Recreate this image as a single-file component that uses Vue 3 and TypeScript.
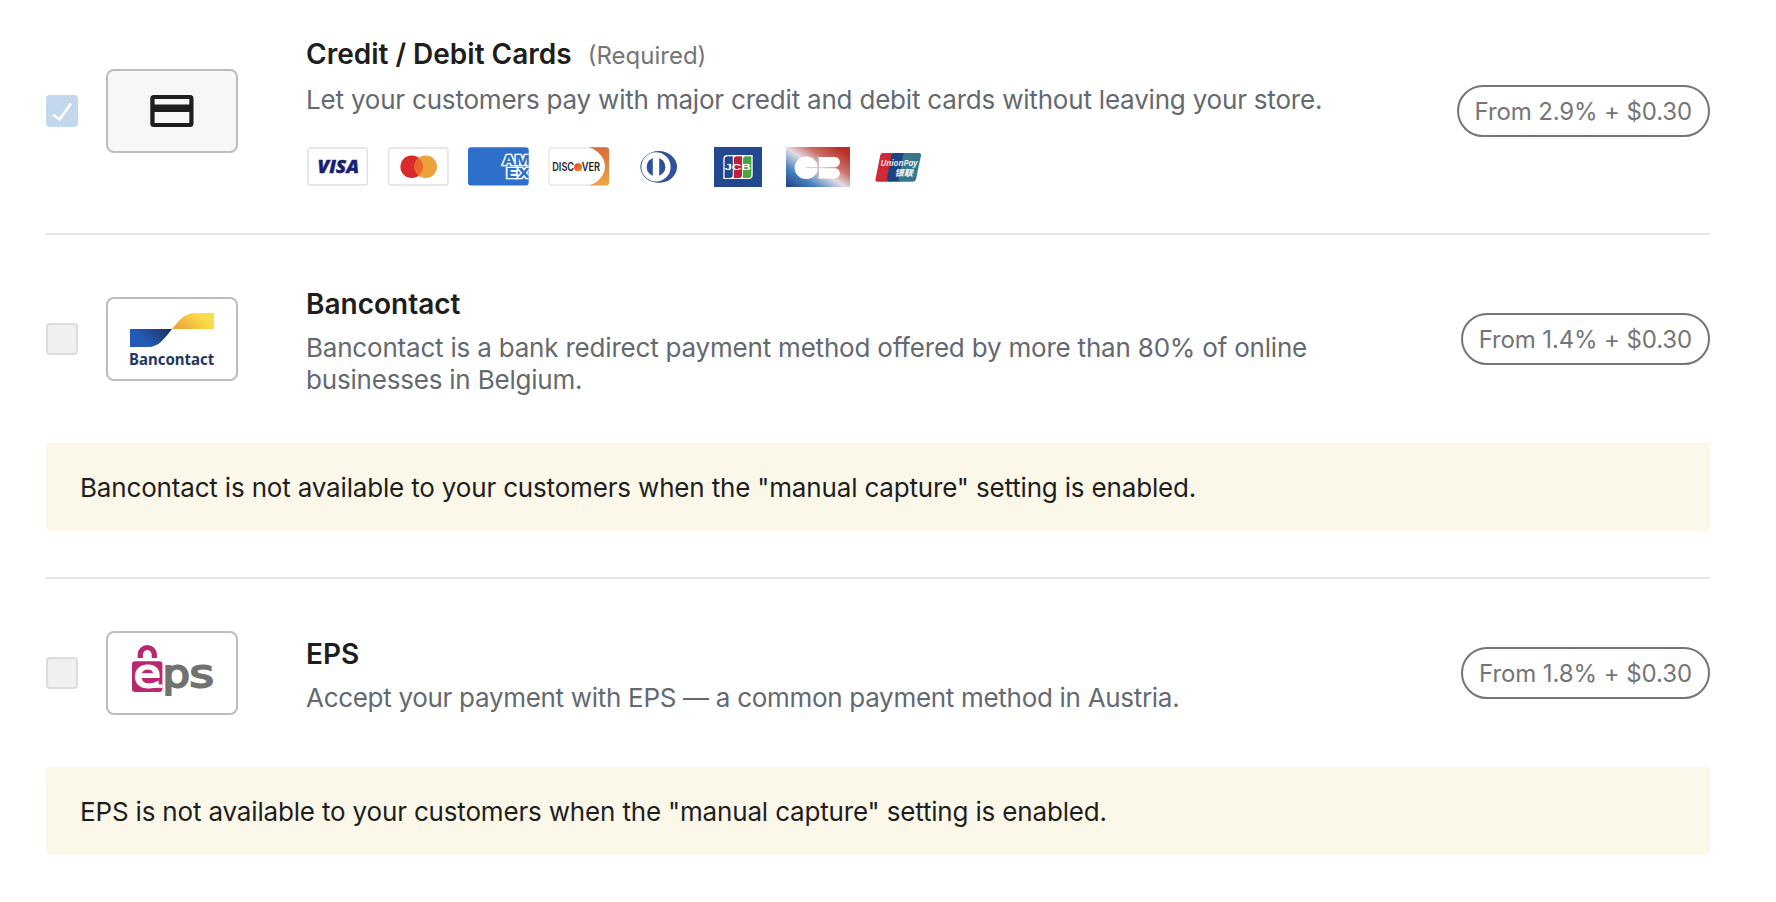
<template>
  <div class="payment-methods">
    <section v-for="method in methods" :key="method.id" class="method" :class="method.id">
      <div class="method-row">
        <span class="checkbox" :class="{ checked: method.checked }" role="checkbox" :aria-checked="method.checked">
          <svg v-if="method.checked" width="32" height="32" viewBox="0 0 32 32">
            <path d="M7 19.5 L13.5 24.5 L25 8.5" fill="none" stroke="#fff" stroke-width="2.6" />
          </svg>
        </span>

        <div class="method-logo">
          <svg v-if="method.id === 'card'" width="128" height="80" viewBox="0 0 128 80">
            <rect x="42.3" y="24" width="43.2" height="32" rx="3.5" fill="#1e1e1e" />
            <rect x="46.6" y="28" width="34.7" height="5.5" fill="#f6f7f7" />
            <rect x="46.6" y="41" width="34.7" height="11" fill="#f6f7f7" />
          </svg>

          <svg v-else-if="method.id === 'bancontact'" width="128" height="80" viewBox="0 0 128 80">
            <defs>
              <linearGradient id="bc-blue" x1="0" y1="0.6" x2="1" y2="0.2">
                <stop offset="0.3" stop-color="#235ab5" />
                <stop offset="1" stop-color="#1e3264" />
              </linearGradient>
              <linearGradient id="bc-yellow" x1="0" y1="0.7" x2="1" y2="0.3">
                <stop offset="0.1" stop-color="#efaa3a" />
                <stop offset="0.75" stop-color="#fadb4a" />
              </linearGradient>
            </defs>
            <path d="M22 30 H64 C56 40 51 48 40 48 H22 Z" fill="url(#bc-blue)" />
            <path d="M64 30 C72 20 77 14 88 14 H106 V30 Z" fill="url(#bc-yellow)" />
            <text x="21" y="65.6" class="bc-text" textLength="85.2" lengthAdjust="spacingAndGlyphs">Bancontact</text>
          </svg>

          <svg v-else width="128" height="80" viewBox="0 0 128 80">
            <path d="M32.3 25 V21.5 A7 7 0 0 1 46.3 21.5 V25" fill="none" stroke="#b9276e" stroke-width="5.2" />
            <rect x="24" y="28.3" width="30.4" height="30.7" rx="3" fill="#b9276e" />
            <text x="25.8" y="54" class="eps-text eps-e" textLength="27" lengthAdjust="spacingAndGlyphs">e</text>
            <rect x="41" y="51.4" width="13.4" height="3.4" fill="#fff" />
            <text x="54.5" y="54" class="eps-text" textLength="27.5" lengthAdjust="spacingAndGlyphs">p</text>
            <text x="81.5" y="54" class="eps-text" textLength="24.5" lengthAdjust="spacingAndGlyphs">s</text>
          </svg>
        </div>

        <div class="method-info">
          <h3>
            {{ method.title }}
            <span v-if="method.required" class="required">(Required)</span>
          </h3>
          <p>{{ method.description }}</p>

          <div v-if="method.id === 'card'" class="brands">
            <!-- Visa -->
            <svg width="64" height="40" viewBox="0 0 64 40">
              <rect x="2" y="1" width="59.3" height="37" rx="2.5" fill="#fff" stroke="#e0e0e0" stroke-width="1.4" />
              <text x="11.5" y="26" class="visa" textLength="41.5" lengthAdjust="spacingAndGlyphs">VISA</text>
            </svg>
            <!-- Mastercard -->
            <svg width="64" height="40" viewBox="0 0 64 40">
              <rect x="2.7" y="1" width="59.3" height="37" rx="2.5" fill="#fff" stroke="#e0e0e0" stroke-width="1.4" />
              <circle cx="25.7" cy="19.7" r="11.3" fill="#d92b2b" />
              <circle cx="39.7" cy="19.7" r="11.3" fill="#eba23e" />
              <path d="M32.7 10.8 A11.3 11.3 0 0 1 32.7 28.6 A11.3 11.3 0 0 1 32.7 10.8 Z" fill="#eb672c" />
            </svg>
            <!-- American Express -->
            <svg width="64" height="40" viewBox="0 0 64 40">
              <defs>
                <clipPath id="amex-clip"><rect x="2" y="0.3" width="60.7" height="38.2" rx="3" /></clipPath>
              </defs>
              <g clip-path="url(#amex-clip)">
                <rect width="64" height="40" fill="#2e6fcb" />
                <text x="36.5" y="18" class="amex" textLength="28" lengthAdjust="spacingAndGlyphs">AM</text>
                <text x="40.5" y="31" class="amex" textLength="24" lengthAdjust="spacingAndGlyphs">EX</text>
              </g>
            </svg>
            <!-- Discover -->
            <svg width="64" height="40" viewBox="0 0 64 40">
              <defs>
                <linearGradient id="disc-edge" x1="0" y1="0" x2="0" y2="1">
                  <stop offset="0" stop-color="#d96c35" />
                  <stop offset="1" stop-color="#eda545" />
                </linearGradient>
                <linearGradient id="disc-dot" x1="0" y1="0" x2="1" y2="1">
                  <stop offset="0" stop-color="#d94a25" />
                  <stop offset="1" stop-color="#f28b2d" />
                </linearGradient>
              </defs>
              <rect x="3" y="1" width="59" height="37" rx="2.5" fill="#fff" stroke="#eee7e3" stroke-width="1.4" />
              <path d="M43 0.3 H60 Q63 0.3 63 3.3 V35.5 Q63 38.5 60 38.5 H43 C52 36 59 28 59 19.5 C59 11 52 3 43 0.3 Z" fill="url(#disc-edge)" />
              <text x="6.3" y="24.2" class="discover" textLength="21.7" lengthAdjust="spacingAndGlyphs">DISC</text>
              <circle cx="32.1" cy="20.3" r="4" fill="url(#disc-dot)" />
              <text x="35.7" y="24.2" class="discover" textLength="18.3" lengthAdjust="spacingAndGlyphs">VER</text>
            </svg>
            <!-- Diners Club -->
            <svg width="64" height="40" viewBox="0 0 64 40">
              <ellipse cx="32.7" cy="19.9" rx="18.3" ry="15.9" fill="#2f509b" />
              <circle cx="30" cy="19.9" r="14.6" fill="#fff" />
              <circle cx="30" cy="19.9" r="9.4" fill="#2f509b" />
              <rect x="26.8" y="9.5" width="6.4" height="20.8" fill="#fff" />
            </svg>
            <!-- JCB -->
            <svg width="64" height="40" viewBox="0 0 64 40">
              <rect x="8" width="48" height="40" fill="#22498f" />
              <path d="M21.5 8 H46.7 V28 Q46.7 32 42.7 32 H17.3 V12 Q17.3 8 21.5 8 Z" fill="#fff" />
              <path d="M22 9.2 H26.8 V28 Q26.8 31 23.5 31 H18.6 V12.5 Q18.6 9.2 22 9.2 Z" fill="#22498f" />
              <path d="M31 9.2 H36 V28 Q36 31 32.7 31 H27.8 V12.5 Q27.8 9.2 31 9.2 Z" fill="#c01f3c" />
              <path d="M40.2 9.2 H45.4 V28 Q45.4 31 42 31 H37 V12.5 Q37 9.2 40.2 9.2 Z" fill="#4aa53f" />
              <text x="18.4" y="23.3" class="jcb" textLength="26.6" lengthAdjust="spacingAndGlyphs">JCB</text>
            </svg>
            <!-- Cartes Bancaires -->
            <svg width="64" height="40" viewBox="0 0 64 40">
              <defs>
                <linearGradient id="cb-bg" gradientUnits="userSpaceOnUse" x1="12" y1="50" x2="52" y2="-10">
                  <stop offset="0.02" stop-color="#223b84" />
                  <stop offset="0.25" stop-color="#4381bd" />
                  <stop offset="0.48" stop-color="#e2dce6" />
                  <stop offset="0.65" stop-color="#cb7169" />
                  <stop offset="0.88" stop-color="#b92f25" />
                </linearGradient>
              </defs>
              <rect width="64" height="40" fill="url(#cb-bg)" />
              <ellipse cx="20.2" cy="20.8" rx="11.6" ry="11.2" fill="#fff" />
              <rect x="20.5" y="20.1" width="12" height="1" fill="#c9ccdc" />
              <rect x="31.5" y="9" width="1.5" height="23" fill="#c9bdca" />
              <path d="M33 10 H48.8 A5.1 5.1 0 0 1 48.8 20.2 H33 Z" fill="#fff" />
              <path d="M33 21.2 H48.8 A5.1 5.1 0 0 1 48.8 31.4 H33 Z" fill="#fff" />
            </svg>
            <!-- UnionPay -->
            <svg width="64" height="40" viewBox="0 0 64 40">
              <path d="M17 6 H27 L21 34.7 H11.5 Q9 34.7 9.5 32 L14.3 8.3 Q14.8 6 17 6 Z" fill="#cf2935" />
              <path d="M28 6 H40 L34 34.7 H22.5 Q20.3 34.7 20.8 32 L25.4 8.3 Q26 6 28 6 Z" fill="#1c427f" />
              <path d="M39 6 H53 Q55.5 6 55 8.5 L50 32.3 Q49.5 34.7 47 34.7 H34 Q32 34.7 32.5 32 L37 8 Q37.3 6 39 6 Z" fill="#36788a" />
              <text x="14.5" y="19" class="unionpay" textLength="37" lengthAdjust="spacingAndGlyphs">UnionPay</text>
              <text x="28.5" y="28.6" class="unionpay-cn" textLength="18.5" lengthAdjust="spacingAndGlyphs">银联</text>
            </svg>
          </div>
        </div>

        <span class="fee">{{ method.fee }}</span>
      </div>

      <div v-if="method.notice" class="notice">{{ method.notice }}</div>
    </section>
  </div>
</template>

<script setup lang="ts">
interface PaymentMethod {
  id: string
  title: string
  description: string
  fee: string
  checked: boolean
  required?: boolean
  notice?: string
}

const methods: PaymentMethod[] = [
  {
    id: 'card',
    title: 'Credit / Debit Cards',
    description: 'Let your customers pay with major credit and debit cards without leaving your store.',
    fee: 'From 2.9% + $0.30',
    checked: true,
    required: true,
  },
  {
    id: 'bancontact',
    title: 'Bancontact',
    description: 'Bancontact is a bank redirect payment method offered by more than 80% of online businesses in Belgium.',
    fee: 'From 1.4% + $0.30',
    checked: false,
    notice: 'Bancontact is not available to your customers when the "manual capture" setting is enabled.',
  },
  {
    id: 'eps',
    title: 'EPS',
    description: 'Accept your payment with EPS — a common payment method in Austria.',
    fee: 'From 1.8% + $0.30',
    checked: false,
    notice: 'EPS is not available to your customers when the "manual capture" setting is enabled.',
  },
]
</script>

<style>
body { background: #fff; }
</style>

<style scoped>
.payment-methods {
  box-sizing: border-box;
  height: 902px;
  padding: 0 66px 0 46px;
  overflow: hidden;
  font-family: Inter, "Liberation Sans", "Noto Sans CJK SC", sans-serif;
  font-size: 26px;
  color: #1e1e1e;
}
.method + .method { border-top: 2px solid #e7e7e8; }
.method-row {
  display: flex;
  align-items: center;
}
.card .method-row { height: 222px; padding-bottom: 11px; }
.bancontact .method-row { height: 208px; }
.eps .method-row { height: 188px; }
.bancontact { padding-bottom: 46px; }
.checkbox {
  box-sizing: border-box;
  flex: none;
  width: 32px;
  height: 32px;
  background: #f0f0f0;
  border: 2px solid #dcdcdd;
  border-radius: 4px;
}
.checkbox.checked { background: #c3d8ec; border: none; }
.checkbox svg { display: block; }
.method-logo {
  flex: none;
  width: 128px;
  height: 80px;
  margin-left: 28px;
  border: 2px solid #bdbdbd;
  border-radius: 8px;
}
.card .method-logo { background: #f6f7f7; }
.method-logo svg { display: block; }
.method-info {
  flex: none;
  width: 1040px;
  margin-left: 68px;
  padding-top: 5px;
}
.card .method-info { padding-top: 2px; }
h3 {
  margin: 0;
  font-size: 28px;
  line-height: 32px;
  font-weight: 600;
}
.required {
  margin-left: 9px;
  font-size: 24px;
  font-weight: 400;
  color: #757575;
}
p {
  margin: 12px 0 0;
  line-height: 32px;
  letter-spacing: -0.2px;
  color: #646970;
}
.eps p { letter-spacing: -0.3px; }
.brands {
  display: flex;
  gap: 16px;
  margin-top: 31px;
}
.fee {
  box-sizing: border-box;
  height: 52px;
  margin-left: auto;
  padding: 0 16px;
  border: 2px solid #757575;
  border-radius: 26px;
  font-size: 24px;
  line-height: 49px;
  letter-spacing: -0.13px;
  white-space: nowrap;
  color: #757575;
}
.eps .fee { letter-spacing: -0.08px; }
.notice {
  height: 88px;
  padding: 0 34px;
  background: #fcf8e9;
  border-radius: 4px;
  line-height: 89px;
  letter-spacing: -0.17px;
}
.bc-text { font: 700 16px "Noto Sans", sans-serif; fill: #1e3764; }
.eps-text { font: 400 39px "DejaVu Sans", sans-serif; fill: #71716f; stroke: #71716f; stroke-width: 2px; }
.eps-e { fill: #fff; stroke: #fff; }
.visa { font: italic 800 17.6px "Open Sans", sans-serif; fill: #1a1f71; stroke: #1a1f71; stroke-width: 0.4px; }
.amex { font: 800 13.5px Inter, sans-serif; fill: #2e6fcb; stroke: #fff; stroke-width: 2.6px; paint-order: stroke; }
.discover { font: 600 11.3px Inter, sans-serif; fill: #222; }
.jcb { font: 700 9.5px "Liberation Sans", sans-serif; fill: #fff; }
.unionpay { font: italic 600 8.5px "Open Sans", sans-serif; fill: #fff; }
.unionpay-cn { font: italic 700 8.6px "Noto Sans CJK SC", sans-serif; fill: #fff; }
</style>
